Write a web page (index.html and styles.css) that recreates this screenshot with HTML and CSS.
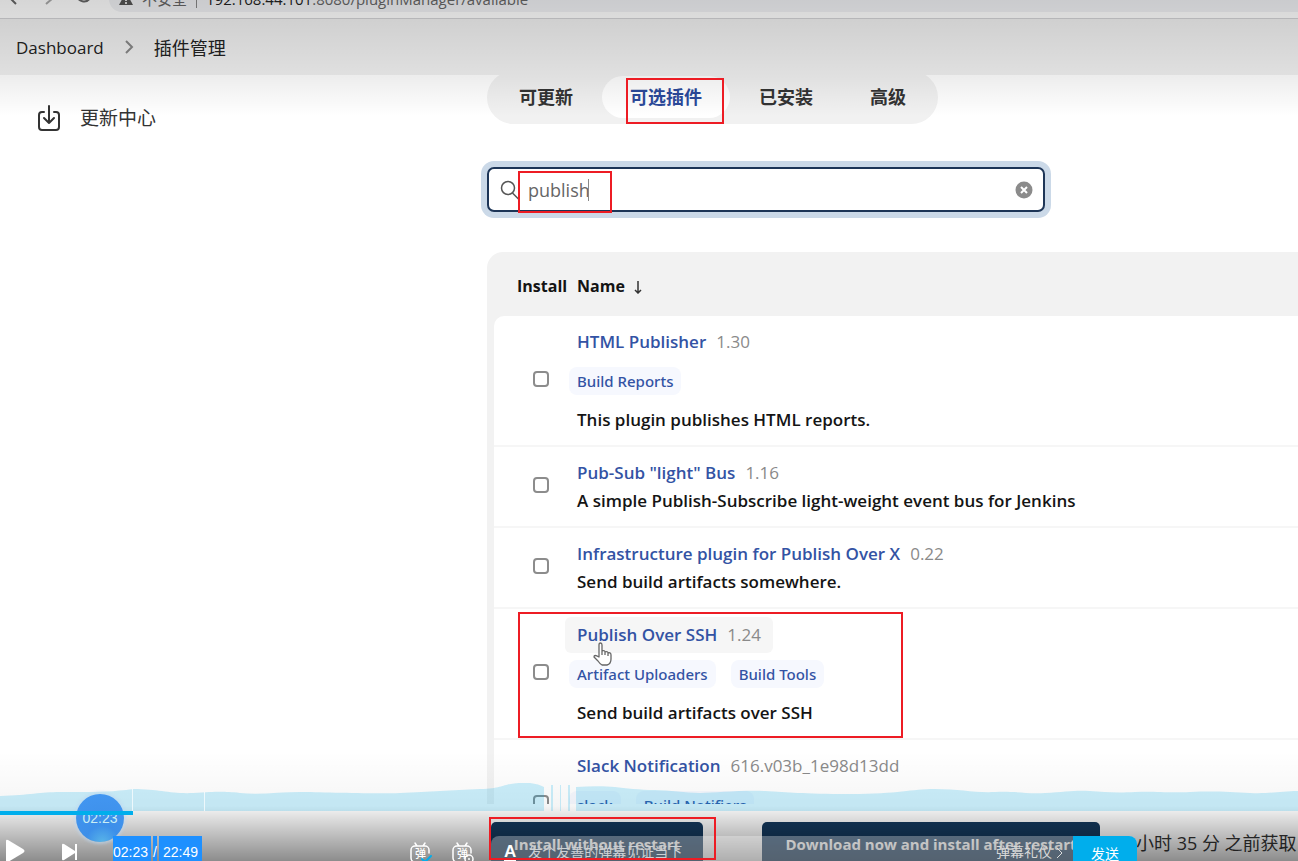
FILE: index.html
```html
<!DOCTYPE html>
<html lang="zh-CN">
<head>
<meta charset="utf-8">
<title>插件管理</title>
<link rel="stylesheet" href="styles.css">
</head>
<body>
<div class="page">
  <div class="toolbar">
    <svg class="nav-icons" width="84" height="20" viewBox="0 0 84 20" fill="none" stroke-width="2">
      <path d="M8 0 2 6l6 6" stroke="#666"/><path d="m38 0 7 6-7 6" stroke="#aaa"/><path d="M69 3a7 7 0 0 0 13 3" stroke="#666"/>
    </svg>
    <div class="address">
      <svg width="14" height="14" viewBox="0 0 14 14"><path d="M7 0 14 13H0z" fill="#555"/><path d="M7 5v4m0 1v2" stroke="#ddd" stroke-width="2"/></svg>
      <span>不安全</span><span class="divider"></span>
      <span class="url"><b>192.168.44.101</b>:8080/pluginManager/available</span>
    </div>
  </div>
  <nav class="crumbs">
    <a href="#">Dashboard</a>
    <svg width="10" height="14" viewBox="0 0 10 14" fill="none" stroke="#888" stroke-width="2"><path d="m2 1 6 6-6 6"/></svg>
    <a href="#" class="current">插件管理</a>
  </nav>
  <div class="body">
    <aside class="side">
      <a href="#" class="side-link">
        <svg width="24" height="28" viewBox="0 0 24 28" fill="none" stroke="#333" stroke-width="2" stroke-linecap="round" stroke-linejoin="round"><path d="M7 8H5a3 3 0 0 0-3 3v12a3 3 0 0 0 3 3h14a3 3 0 0 0 3-3V11a3 3 0 0 0-3-3h-2M12 2v17m-5-5 5 5 5-5"/></svg>
        更新中心
      </a>
    </aside>
    <main class="main">
      <div class="scroll">
        <div class="tabs">
          <a href="#">可更新</a><a href="#" class="active">可选插件</a><a href="#">已安装</a><a href="#">高级</a>
        </div>
        <div class="search">
          <svg width="20" height="20" viewBox="0 0 20 20" fill="none" stroke="#555" stroke-width="1.5"><circle cx="8" cy="8" r="6.500"/><path d="m12.500 13 6 6"/></svg>
          <input type="text" value="publish" aria-label="搜索插件"><span class="caret"></span>
          <button class="clear" aria-label="清除"><svg width="18" height="18" viewBox="0 0 18 18"><circle cx="9" cy="9" r="8.500" fill="#8b8b8b"/><path d="m6 6 6 6m0-6-6 6" stroke="#fff" stroke-width="2"/></svg></button>
        </div>
        <div class="table-wrap">
          <table class="plugins">
            <thead><tr><th class="pick">Install</th><th>Name <svg width="10" height="14" viewBox="0 0 10 14" fill="none" stroke="#333" stroke-width="1.5"><path d="M5 1v12M2 10l3 3 3-3"/></svg></th></tr></thead>
            <tbody>
              <tr><td class="pick"><input type="checkbox" aria-label="HTML Publisher"></td><td><div class="name"><a href="#">HTML Publisher</a><span class="ver">1.30</span></div><div class="tags"><a href="#">Build Reports</a></div><div class="desc">This plugin publishes HTML reports.</div></td></tr>
              <tr><td class="pick"><input type="checkbox" aria-label="Pub-Sub light Bus"></td><td><div class="name"><a href="#">Pub-Sub "light" Bus</a><span class="ver">1.16</span></div><div class="desc">A simple Publish-Subscribe light-weight event bus for Jenkins</div></td></tr>
              <tr><td class="pick"><input type="checkbox" aria-label="Infrastructure plugin for Publish Over X"></td><td><div class="name"><a href="#">Infrastructure plugin for Publish Over X</a><span class="ver">0.22</span></div><div class="desc">Send build artifacts somewhere.</div></td></tr>
              <tr><td class="pick"><input type="checkbox" aria-label="Publish Over SSH"></td><td><div class="name hovered"><a href="#">Publish Over SSH</a><span class="ver">1.24</span></div><div class="tags"><a href="#">Artifact Uploaders</a><a href="#">Build Tools</a></div><div class="desc">Send build artifacts over SSH</div></td></tr>
              <tr class="partial"><td class="pick"><input type="checkbox" aria-label="Slack Notification"></td><td><div class="name"><a href="#">Slack Notification</a><span class="ver">616.v03b_1e98d13dd</span></div><div class="tags"><a href="#">slack</a><a href="#">Build Notifiers</a></div></td></tr>
            </tbody>
          </table>
        </div>
      </div>
      <div class="actions">
        <button class="narrow">Install without restart</button>
        <button class="wide">Download now and install after restart</button>
        <span class="fetched">小时 35 分 之前获取</span>
      </div>
    </main>
  </div>

  <div class="shade-top"></div>
  <div class="shade-bottom"></div>

  <svg class="wave" viewBox="0 0 1298 30" preserveAspectRatio="none">
    <path fill="#00aeec" fill-opacity=".2" d="M0 15C30 14 40 11 60 11S105 12 133 8C160 8 170 13 193 12S220 10 240 12 280 11 300 11 370 13 400 12 450 9 480 8 500 1 530 2Q539 3 544 6V30H0z"/>
    <path fill="#00aeec" fill-opacity=".2" d="M576 6C590 5 605 5 615 6S640 9 655 9 685 12 700 12 740 9 765 10 800 13 850 13 910 8 935 8 975 12 995 11 1025 13 1045 12 1075 9 1090 10 1115 12 1135 11 1165 12 1190 11 1230 11 1250 12 1280 10 1298 10V30H576zM551 4h2v26h-2zM560 4h1v26h-1zM568 4h2v26h-2z"/>
    <path stroke="#fff" stroke-opacity=".7" d="M132.500 8v22M204.500 11v19"/>
  </svg>
  <div class="bubble">02:23</div>
  <div class="progress"></div>
  <div class="player">
    <div class="transport">
      <button aria-label="播放"><svg width="22" height="26" viewBox="0 0 22 26"><path d="M2 2Q2 0 4 1l15 9q3 2 0 4L4 23q-2 1-2-1z" fill="#fff"/></svg></button>
      <button aria-label="下一个"><svg width="18" height="18" viewBox="0 0 18 18" fill="#fff"><path d="M1 2Q1 0 3 1l11 7q2 1 0 2L3 17q-2 1-2-1zM14 1h2v16h-2z"/></svg></button>
      <span class="time"><span>02:23</span><span>/</span><span class="total">22:49</span></span>
    </div>
    <div class="danmu-icons">
      <button aria-label="弹幕开关"><svg width="24" height="22" viewBox="0 0 24 22" fill="none" stroke="#fff" stroke-width="1.500" stroke-linecap="round"><path d="M20 11V8a4 4 0 0 0-4-4H6a4 4 0 0 0-4 4v8a4 4 0 0 0 4 4h5M6 1l2 3m8-3-2 3"/><text x="6" y="16" class="glyph">弹</text><path d="m13 17 3 3 6-6" stroke="#00aeec" stroke-width="2"/></svg></button>
      <button aria-label="弹幕设置"><svg width="24" height="22" viewBox="0 0 24 22" fill="none" stroke="#fff" stroke-width="1.500" stroke-linecap="round"><path d="M20 11V8a4 4 0 0 0-4-4H6a4 4 0 0 0-4 4v8a4 4 0 0 0 4 4h5M6 1l2 3m8-3-2 3"/><text x="6" y="16" class="glyph">弹</text><circle cx="18" cy="17" r="4"/><circle cx="18" cy="17" r="1" stroke="none" fill="#fff"/></svg></button>
    </div>
    <div class="send-box">
      <span class="font-btn">A</span>
      <input type="text" placeholder="发个友善的弹幕见证当下" aria-label="弹幕">
      <a href="#" class="etiquette">弹幕礼仪 <svg width="7" height="12" viewBox="0 0 7 12" fill="none" stroke="#ddd"><path d="m1 1 5 5-5 5"/></svg></a>
      <button class="send">发送</button>
    </div>
  </div>

  <div class="mark mark-tab"></div>
  <div class="mark mark-search"></div>
  <div class="mark mark-row"></div>
  <div class="mark mark-install"></div>
  <svg class="pointer" width="20" height="24" viewBox="0 0 20 24" fill="#fff" stroke="#666" stroke-width="1.3" stroke-linejoin="round"><path d="M6 15V3q0-2 1.500-2T9 3v6q3-1 3 1 3-1 3 1 3-1 3 2v4q0 5-4 6H9q-2-1-4-4l-4-4q0-3 5 0zM9 9v4m3-3v3m3-2v3"/></svg>
</div>
</body>
</html>
```
FILE: styles.css
```css
* { box-sizing: border-box; }
body { margin: 0; font-family: "Open Sans", "Noto Sans CJK SC", sans-serif; font-size: 18px; color: #141414; }
a { text-decoration: none; color: inherit; }
button { border: 0; padding: 0; background: none; font: inherit; color: inherit; }
svg { flex: none; }

.page { position: relative; height: 100vh; overflow: hidden; display: flex; flex-direction: column; background: #fff; }

.toolbar { height: 19px; flex: none; display: flex; align-items: flex-end; gap: 17px; background: #fff; border-bottom: 1px solid #d3d3d6; padding-bottom: 6px; }
.nav-icons { margin-left: 8px; }
.address { flex: 1; height: 26px; display: flex; align-items: center; gap: 9px; padding-left: 10px; background: #f1f2f5; border-radius: 13px 0 0 13px; color: #666; font-size: 15px; line-height: 26px; white-space: nowrap; }
.divider { width: 1px; height: 18px; background: #888; }
.url b { font-weight: 400; color: #222; }

.crumbs { position: relative; z-index: 1; flex: none; height: 56px; display: flex; align-items: center; gap: 20px; padding: 0 16px; background: #f1f1f1; color: #222; }
.crumbs a { font-size: 17px; }
.crumbs .current { font-size: 18px; }

.body { flex: 1; min-height: 0; display: flex; }
.side { flex: none; width: 487px; padding: 28px 37px; }
.side-link { display: flex; align-items: center; gap: 19px; font-size: 19px; line-height: 30px; color: #333; }
.main { flex: 1; min-width: 0; display: flex; flex-direction: column; }
.scroll { flex: 1; min-height: 0; overflow: hidden; margin-left: -8px; padding-left: 8px; }

.tabs { display: inline-flex; gap: 1px; margin-top: -4px; padding: 5px 4px 6px; border-radius: 27px; background: #f1f1f1; font-weight: 700; color: #333; vertical-align: top; }
.tabs a { padding: 0 28px; line-height: 42px; border-radius: 21px; }
.tabs .active { background: #fff; color: #2b4a9b; }

.search { width: 558px; height: 45px; margin-top: 43px; display: flex; align-items: center; border: 2px solid #1d3557; border-radius: 7px; box-shadow: 0 0 0 6px #cbd9e8; padding: 0 10px 0 11px; background: #fff; }
.search input { width: 60px; margin-left: 8px; padding: 0; border: 0; outline: 0; background: none; font: inherit; color: #666; }
.caret { width: 1px; height: 22px; background: #888; }
.clear { margin-left: auto; display: flex; }

.table-wrap { margin-top: 40px; padding-left: 7px; background: #f2f2f2; border-radius: 16px 0 0 0; }
.plugins { width: 100%; border-collapse: separate; border-spacing: 0; font-size: 17px; font-weight: 600; }
.plugins th { height: 64px; padding: 3px 0 0; text-align: left; font-size: 16px; }
.plugins th.pick { padding-left: 23px; }
.plugins th svg { margin-left: 4px; vertical-align: middle; }
.plugins td { padding: 12px 0 11px; background: #fff; border-bottom: 2px solid #f6f6f6; line-height: 28px; vertical-align: middle; }
.plugins .pick { width: 83px; }
.plugins td.pick { padding: 0 0 4px 39px; }
.plugins .partial td { padding-bottom: 39px; }
.plugins .partial td.pick { padding-bottom: 4px; }
.plugins tbody tr:first-child td.pick { border-top-left-radius: 10px; }
.plugins input { appearance: none; display: block; width: 16px; height: 16px; margin: 0; border: 2px solid #8c8c8c; border-radius: 4px; background: #fff; }
.name { display: flex; gap: 10px; width: max-content; color: #3353a4; }
.ver { color: #8a8a8a; font-weight: 400; }
.hovered { margin: -4px -12px; padding: 4px 12px; background: #f6f6f6; border-radius: 6px; }
.tags { display: flex; gap: 15px; margin: 11px -8px; font-family: "Noto Sans", sans-serif; font-size: 15px; font-weight: 500; color: #3353a4; }
.tags a { padding: 0 8px; border-radius: 8px; background: #f6f8fe; }

.actions { flex: none; height: 57px; display: flex; align-items: flex-start; padding: 18px 0 0 4px; overflow: hidden; background: #fff; white-space: nowrap; }
.actions button { flex: none; height: 44px; border-radius: 5px; background: #14385c; color: #fff; font-size: 15px; font-weight: 700; }
.narrow { width: 212px; }
.wide { width: 338px; margin-left: 59px; }
.fetched { margin-left: 36px; line-height: 42px; color: #333; }

.shade-top, .shade-bottom { position: absolute; z-index: 2; left: 0; right: 0; pointer-events: none; }
.shade-top { top: 0; height: 116px; background: linear-gradient(rgba(0,0,0,.16), rgba(0,0,0,.07) 66%, transparent); }
.shade-bottom { bottom: 0; height: 110px; background: linear-gradient(transparent, rgba(0,0,0,.04) 50%, rgba(0,0,0,.45)); }

.wave { position: absolute; z-index: 3; left: 0; bottom: 50px; width: 100%; height: 30px; }
.bubble { position: absolute; z-index: 3; left: 76px; bottom: 19px; width: 48px; height: 48px; border-radius: 50%; background: radial-gradient(circle at 55% 100%, #58b4e8 0, #3d8fe9 30%, #4397f2 100%); box-shadow: 0 0 3px 2px rgba(190,215,240,.6); color: #c9eef5; font: 14px/48px "Liberation Sans", sans-serif; text-align: center; }
.progress { position: absolute; z-index: 3; left: 0; bottom: 46px; width: 133px; height: 4px; background: #00aeec; }

.player { position: absolute; z-index: 3; left: 0; right: 0; bottom: 0; height: 25px; display: flex; overflow: hidden; color: #fff; font: 14px/32px "Liberation Sans", "Noto Sans CJK SC", sans-serif; }
.transport { width: 409px; flex: none; display: flex; padding-left: 4px; }
.transport button { width: 57px; height: 32px; display: flex; align-items: center; }
.transport button:nth-child(2) { width: 52px; }
.time { display: flex; gap: 2px; }
.time span { background: #1e90ff; padding-right: 3px; }
.time span:nth-child(2) { padding: 0; }
.time .total { padding: 0 4px; }
.danmu-icons { width: 82px; flex: none; display: flex; gap: 18px; padding-top: 6px; }
.danmu-icons button { height: 22px; }
.danmu-icons svg { display: block; }
.glyph { font: 500 11px "Noto Sans CJK SC", sans-serif; fill: #fff; stroke: none; }
.send-box { width: 646px; flex: none; height: 32px; display: flex; background: rgba(255,255,255,.3); border-radius: 8px 8px 0 0; }
.font-btn { margin: 5px 12px 0 13px; font-weight: 700; font-size: 17px; line-height: 22px; height: 20px; border-bottom: 3px solid #fff; }
.send-box input { flex: 1; min-width: 0; height: 32px; padding: 0; border: 0; outline: 0; background: none; font: inherit; }
.send-box input::placeholder { color: #ccd0d4; opacity: 1; }
.etiquette { color: #d8d8d8; margin-right: 10px; }
.etiquette svg { vertical-align: middle; }
.send { width: 64px; height: 36px; background: #00aeec; border-radius: 0 8px 0 0; }

.mark { position: absolute; z-index: 4; border: 2px solid #ed1c24; pointer-events: none; }
.mark-tab { left: 626px; top: 78px; width: 98px; height: 46px; }
.mark-search { left: 518px; top: 171px; width: 94px; height: 42px; }
.mark-row { left: 518px; top: 612px; width: 385px; height: 126px; }
.mark-install { left: 489px; top: 817px; width: 227px; height: 43px; }
.pointer { position: absolute; z-index: 4; left: 593px; top: 642px; }
```
